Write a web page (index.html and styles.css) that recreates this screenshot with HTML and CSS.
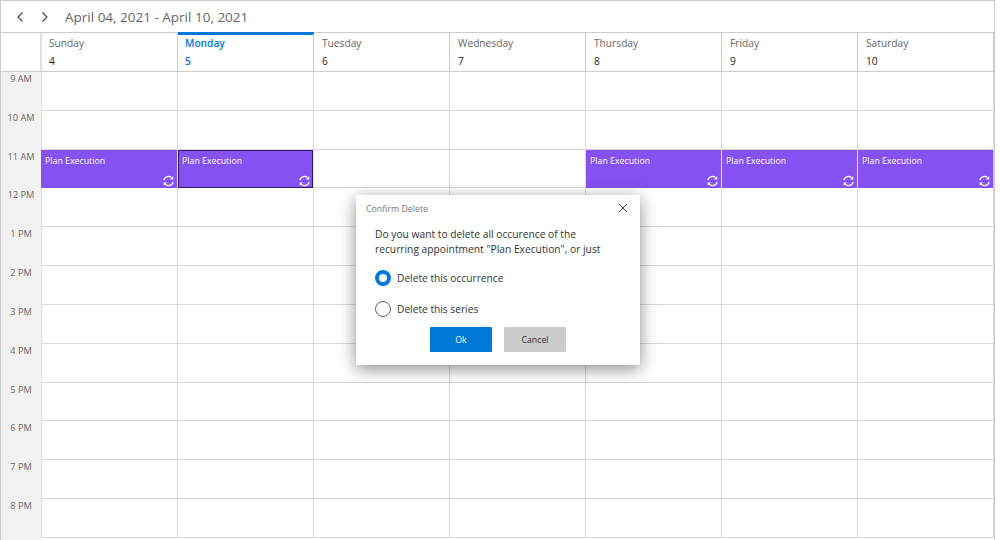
FILE: index.html
```html
<!DOCTYPE html>
<html lang="en">
<head>
<meta charset="utf-8">
<title>Scheduler</title>
<link rel="stylesheet" href="styles.css">
</head>
<body>
<div class="scheduler">
  <div class="toolbar">
    <svg class="nav" width="10" height="12" viewBox="0 0 10 12"><path d="M7.5 1.5 3 6l4.5 4.5"/></svg>
    <svg class="nav" width="10" height="12" viewBox="0 0 10 12"><path d="M2.5 1.5 7 6l-4.5 4.5"/></svg>
    <span class="range">April 04, 2021 - April 10, 2021</span>
  </div>
  <div class="head">
    <div class="corner"></div>
    <div class="day"><span class="name">Sunday</span><span class="num">4</span></div>
    <div class="day today"><span class="name">Monday</span><span class="num">5</span></div>
    <div class="day"><span class="name">Tuesday</span><span class="num">6</span></div>
    <div class="day"><span class="name">Wednesday</span><span class="num">7</span></div>
    <div class="day"><span class="name">Thursday</span><span class="num">8</span></div>
    <div class="day"><span class="name">Friday</span><span class="num">9</span></div>
    <div class="day"><span class="name">Saturday</span><span class="num">10</span></div>
  </div>
  <div class="body">
    <div class="times">
      <div class="time">9 AM</div><div class="time">10 AM</div><div class="time">11 AM</div><div class="time">12 PM</div>
      <div class="time">1 PM</div><div class="time">2 PM</div><div class="time">3 PM</div><div class="time">4 PM</div>
      <div class="time">5 PM</div><div class="time">6 PM</div><div class="time">7 PM</div><div class="time">8 PM</div>
    </div>
    <div class="grid" id="grid"></div>
  </div>
  <div class="dialog">
    <div class="dlg-title"><span>Confirm Delete</span>
      <svg class="close" width="10" height="10" viewBox="0 0 10 10"><path d="M1 1l8 8M9 1 1 9"/></svg>
    </div>
    <p class="msg">Do you want to delete all occurence of the<br>recurring appointment "Plan Execution", or just</p>
    <div class="radio"><span class="dot on"></span>Delete this occurrence</div>
    <div class="radio"><span class="dot"></span>Delete this series</div>
    <div class="buttons"><span class="btn ok">Ok</span><span class="btn cancel">Cancel</span></div>
  </div>
</div>
<script src="app.js"></script>
</body>
</html>
```
FILE: app.js
```js
var grid = document.getElementById('grid');
var icon = '<svg class="rec" width="13" height="12" viewBox="0 0 13 12">' +
  '<path d="M1.9 5.2A4.6 4.6 0 0 1 10 3.2"/><path d="M11.1 6.8A4.6 4.6 0 0 1 3 8.8"/>' +
  '<path class="fill" d="M11.3 1.2v3.2H8.1z"/><path class="fill" d="M1.7 10.8V7.6h3.2z"/></svg>';
for (var r = 0; r < 12; r++) {
  for (var c = 0; c < 7; c++) {
    var cell = document.createElement('div');
    cell.className = 'cell';
    if (r === 2 && c !== 2 && c !== 3) {
      cell.innerHTML = '<div class="appt' + (c === 1 ? ' selected' : '') + '"><span>Plan Execution</span>' + icon + '</div>';
      cell.className = 'cell has-appt';
    }
    grid.appendChild(cell);
  }
}
```
FILE: styles.css
```css
* { box-sizing: border-box; }
html, body { margin: 0; height: 100%; background: #fff; overflow: hidden; }
body { font-family: "Open Sans", "Noto Sans", sans-serif; color: #333; }

.scheduler {
  position: relative;
  width: 995px;
  height: 540px;
  border: solid #ccc;
  border-width: 1px 1px 0 1px;
  overflow: hidden;
}

.toolbar {
  height: 31px;
  display: flex;
  align-items: center;
  padding-left: 14px;
  gap: 15px;
}
.nav { fill: none; stroke: #444; stroke-width: 1.15; }
.range { font-size: 13.5px; color: #666; }

.head {
  display: grid;
  grid-template-columns: 40px 137px repeat(6, 136px);
  height: 40px;
  border-top: 1px solid #ccc;
  border-bottom: 1px solid #ccc;
}
.corner { border-right: 1px solid #e0e0e0; }
.day {
  display: flex;
  flex-direction: column;
  padding: 1px 0 0 8px;
  border-right: 1px solid #ccc;
  font-size: 10.2px;
  line-height: 18px;
}
.day:nth-child(2) { padding-left: 7px; border-left: 1px solid #e0e0e0; }
.day .name { color: #666; }
.day .num { color: #222; }
.day.today { border-top: 3px solid #0078d7; margin-top: -1px; padding: 0 0 0 7px; }
.day.today .name { margin-top: -1px; }
.day.today .name, .day.today .num { color: #0078d7; font-weight: 600; }

.body {
  display: grid;
  grid-template-columns: 40px 953px;
  height: 468px;
}
.times {
  display: grid;
  grid-template-rows: repeat(12, 38.83px);
  background: #f2f2f2;
}
.time {
  font-size: 9.2px;
  color: #666;
  text-align: center;
  line-height: 14px;
}
.grid {
  display: grid;
  grid-template-columns: 137px repeat(6, 136px);
  grid-template-rows: repeat(12, 38.83px);
}
.cell {
  border-right: 1px solid #d9d9d9;
  border-bottom: 1px solid #d9d9d9;
  min-height: 0;
}
.cell:nth-child(7n+1) { border-left: 1px solid #e0e0e0; }
.cell.has-appt { border-left: 0; border-bottom: 0; border-right-color: #e4e4e4; }
.cell.has-appt:nth-child(7n) { border-right-color: #ccc; }
.appt {
  height: 100%;
  position: relative;
  background: #8551f2;
  color: #fff;
  font-size: 8.8px;
  padding: 5px 4px;
  line-height: 13px;
}
.appt.selected { border: 1px solid #2e1a60; padding: 4px 3px; }
.rec { position: absolute; right: 2px; bottom: 1px; fill: none; stroke: #fff; stroke-width: 1.3; }
.appt.selected .rec { right: 1px; bottom: 0; }
.rec .fill { fill: #fff; stroke: none; }

.dialog {
  position: absolute;
  left: 355px;
  top: 194px;
  width: 284px;
  height: 170px;
  background: #fff;
  box-shadow: 0 4px 16px rgba(0, 0, 0, .45);
  padding: 0 19px;
}
.dlg-title {
  display: flex;
  justify-content: space-between;
  align-items: center;
  height: 27px;
  margin-left: -9px;
  margin-right: -7px;
  font-size: 8.8px;
  color: #777;
}
.close { fill: none; stroke: #444; stroke-width: 1; margin-bottom: 2px; }
.msg { margin: 5px 0 0; font-size: 10.25px; line-height: 14.5px; color: #333; }
.radio {
  display: flex;
  align-items: center;
  height: 16px;
  gap: 6px;
  font-size: 10.2px;
  color: #333;
}
.msg + .radio { margin-top: 14px; }
.radio + .radio { margin-top: 15px; }
.dot {
  width: 16px;
  height: 16px;
  border-radius: 50%;
  border: 1.2px solid #666;
  background: #fff;
}
.dot.on { border: 4.5px solid #0078d7; }
.buttons { display: flex; justify-content: center; gap: 12px; margin-top: 10px; }
.btn {
  width: 62px;
  height: 25px;
  display: flex;
  align-items: center;
  justify-content: center;
  font-size: 8.8px;
  border-radius: 1px;
}
.ok { background: #0078d7; color: #fff; }
.cancel { background: #cccccc; color: #333; }
```
